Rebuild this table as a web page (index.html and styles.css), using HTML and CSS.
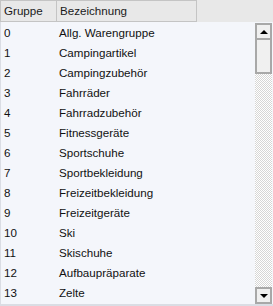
FILE: index.html
```html
<!DOCTYPE html>
<html lang="de">
<head>
  <meta charset="UTF-8">
  <title>Warengruppen</title>
  <link rel="stylesheet" href="styles.css">
</head>
<body>
  <div class="grid">
    <div class="head">
      <div class="hcell col1">Gruppe</div>
      <div class="hcell col2">Bezeichnung</div>
    </div>
    <div class="content">
      <div class="rows">
        <div class="row"><span class="col1">0</span><span class="col2">Allg. Warengruppe</span></div>
        <div class="row"><span class="col1">1</span><span class="col2">Campingartikel</span></div>
        <div class="row"><span class="col1">2</span><span class="col2">Campingzubehör</span></div>
        <div class="row"><span class="col1">3</span><span class="col2">Fahrräder</span></div>
        <div class="row"><span class="col1">4</span><span class="col2">Fahrradzubehör</span></div>
        <div class="row"><span class="col1">5</span><span class="col2">Fitnessgeräte</span></div>
        <div class="row"><span class="col1">6</span><span class="col2">Sportschuhe</span></div>
        <div class="row"><span class="col1">7</span><span class="col2">Sportbekleidung</span></div>
        <div class="row"><span class="col1">8</span><span class="col2">Freizeitbekleidung</span></div>
        <div class="row"><span class="col1">9</span><span class="col2">Freizeitgeräte</span></div>
        <div class="row"><span class="col1">10</span><span class="col2">Ski</span></div>
        <div class="row"><span class="col1">11</span><span class="col2">Skischuhe</span></div>
        <div class="row"><span class="col1">12</span><span class="col2">Aufbaupräparate</span></div>
        <div class="row"><span class="col1">13</span><span class="col2">Zelte</span></div>
      </div>
      <div class="scroll">
        <div class="sbtn"><span class="arrow up"></span></div>
        <div class="thumb"></div>
        <div class="track"></div>
        <div class="sbtn"><span class="arrow down"></span></div>
      </div>
    </div>
  </div>
</body>
</html>
```

FILE: styles.css
```css
body {
  margin: 0;
  font-family: "Liberation Sans", Arial, sans-serif;
  font-size: 11.6px;
  color: #111;
}
.grid {
  width: 273px;
  height: 306px;
  display: flex;
  flex-direction: column;
  background: #f4f6fb;
  overflow: hidden;
}
.head {
  display: flex;
  height: 22px;
  background: #e8e8e8;
  flex-shrink: 0;
}
.hcell {
  box-sizing: border-box;
  height: 22px;
  border: 1px solid #c4c4c4;
  border-left: none;
  line-height: 20px;
  padding-left: 3px;
  color: #1a1a1a;
}
.hcell.col1 { width: 57px; border-left: 1px solid #c4c4c4; }
.hcell.col2 { width: 140px; padding-left: 3px; }
.content {
  flex: 1;
  display: flex;
  border-left: 1px solid #dadde4;
  border-bottom: 2px solid #dadde4;
}
.rows {
  flex: 1;
  padding-top: 1px;
}
.row {
  display: flex;
  height: 20px;
  line-height: 20px;
}
.row .col1 { width: 55px; padding-left: 3px; }
.scroll {
  width: 17px;
  margin-right: 1px;
  margin-top: 1px;
  display: flex;
  flex-direction: column;
}
.sbtn, .thumb {
  box-sizing: border-box;
  border: 2px solid #a8a8a8;
  background: #f0f0f0;
}
.sbtn {
  height: 17px;
  display: flex;
  align-items: center;
  justify-content: center;
}
.thumb {
  height: 34px;
  border-top: none;
}
.track {
  flex: 1;
  background: repeating-conic-gradient(#d6d6d6 0 25%, #ffffff 0 50%) 0 0 / 2px 2px;
}
.arrow {
  width: 0;
  height: 0;
  border-left: 4px solid transparent;
  border-right: 4px solid transparent;
}
.arrow.up { border-bottom: 4px solid #000; }
.arrow.down { border-top: 4px solid #000; }
```
